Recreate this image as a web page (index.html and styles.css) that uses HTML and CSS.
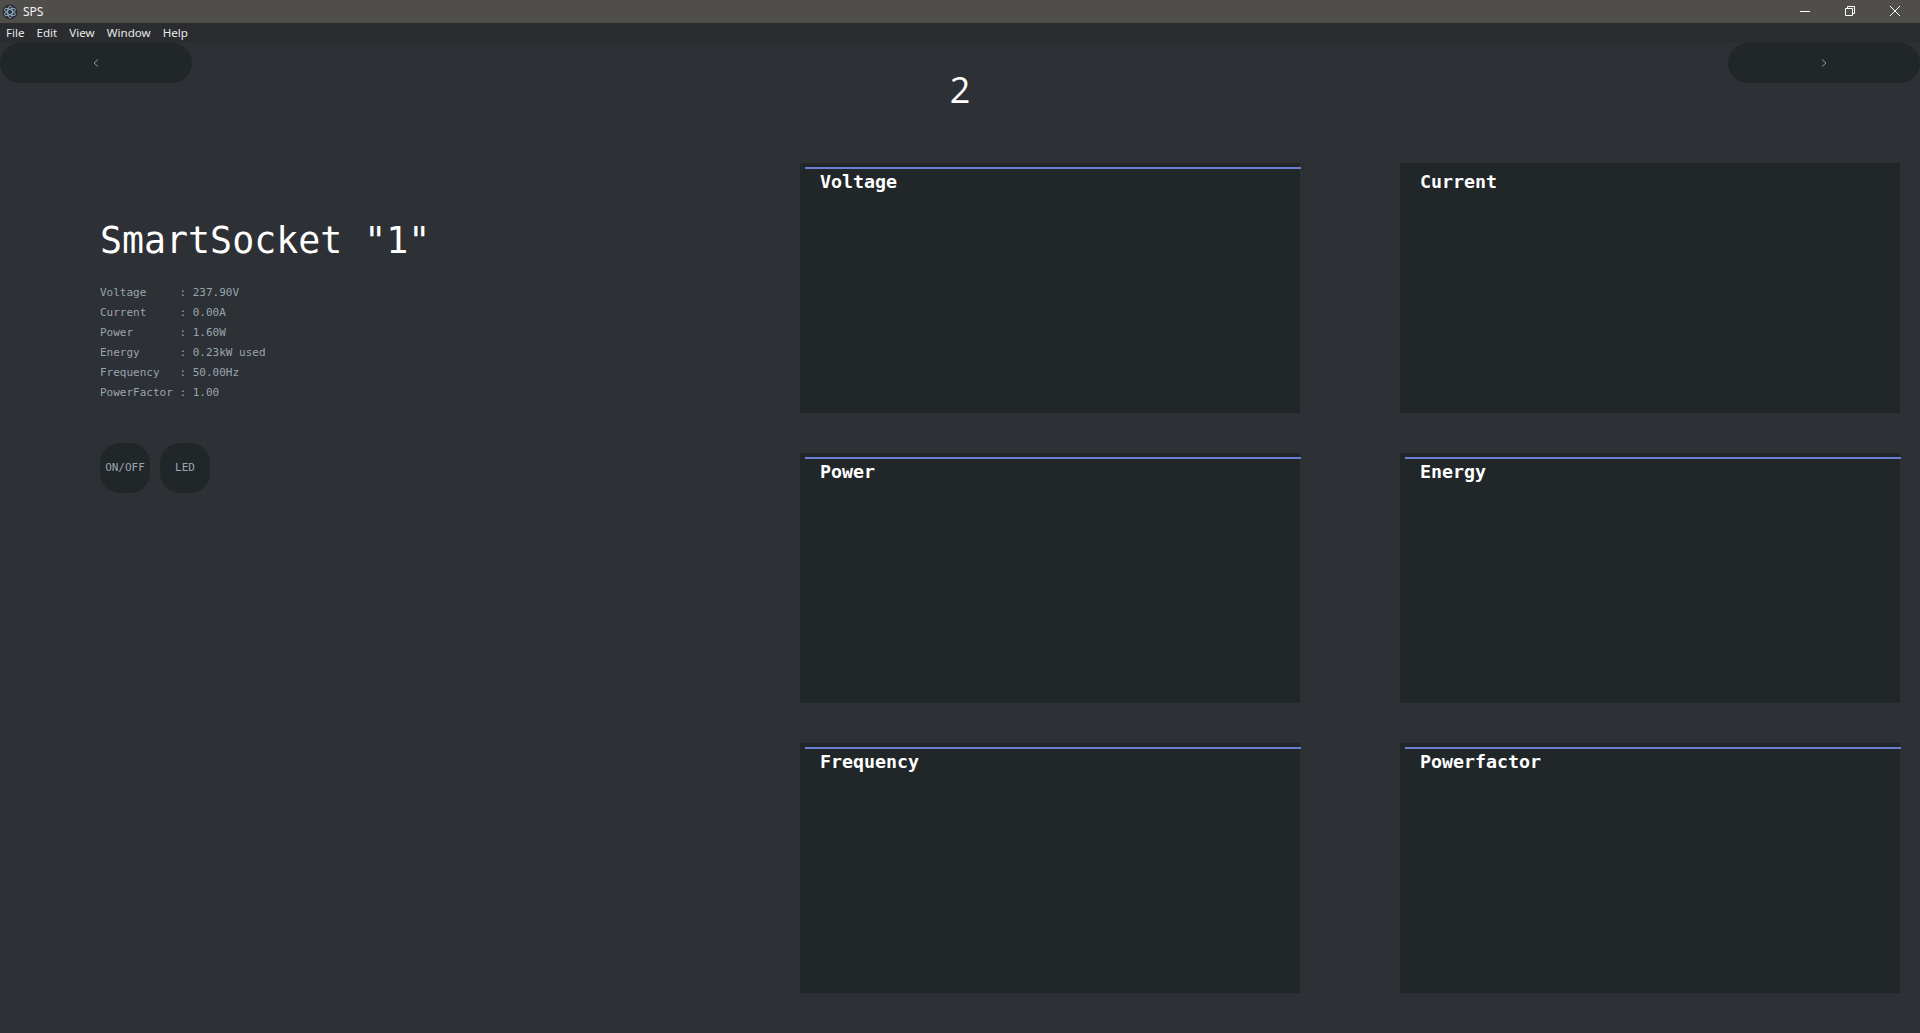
FILE: index.html
```html
<!DOCTYPE html>
<html>
<head>
	<title>SPS</title>
	<link rel="stylesheet" href="styles.css">
</head>
<body>
	<div class="titlebar">
		<div class="titlebar-left">
			<svg class="app-icon" width="16" height="16" viewBox="0 0 16 16">
				<circle cx="8" cy="8" r="7.5" fill="#2b2e3a"/>
				<g fill="none" stroke="#9fc3d2" stroke-width="0.8">
					<ellipse cx="8" cy="8" rx="6" ry="2.4" transform="rotate(30 8 8)"/>
					<ellipse cx="8" cy="8" rx="6" ry="2.4" transform="rotate(90 8 8)"/>
					<ellipse cx="8" cy="8" rx="6" ry="2.4" transform="rotate(150 8 8)"/>
				</g>
			</svg>
			<span>SPS</span>
		</div>
		<div class="window-btns">
			<svg width="10" height="10" viewBox="0 0 10 10"><path d="M0 5.5H10" stroke="#fff" fill="none"/></svg>
			<svg width="10" height="10" viewBox="0 0 10 10"><path d="M0.5 2.5H7.5V9.5H0.5ZM2.5 2.5V0.5H9.5V7.5H7.5" stroke="#fff" fill="none"/></svg>
			<svg width="10" height="10" viewBox="0 0 10 10"><path d="M0 0L10 10M10 0L0 10" stroke="#fff" fill="none"/></svg>
		</div>
	</div>
	<div class="menubar">
		<span>File</span>
		<span>Edit</span>
		<span>View</span>
		<span>Window</span>
		<span>Help</span>
	</div>
	<div class="nav">
		<button class="nav-btn">
			<svg width="6" height="8" viewBox="0 0 6 8"><path d="M5 0.5L1 4L5 7.5" stroke="#8a949c" fill="none"/></svg>
		</button>
		<button class="nav-btn">
			<svg width="6" height="8" viewBox="0 0 6 8"><path d="M1 0.5L5 4L1 7.5" stroke="#8a949c" fill="none"/></svg>
		</button>
	</div>
	<h1 class="page-num">2</h1>
	<div class="content">
		<div class="info">
			<h2 class="socket-name">SmartSocket "1"</h2>
			<pre class="stats">Voltage     : 237.90V
Current     : 0.00A
Power       : 1.60W
Energy      : 0.23kW used
Frequency   : 50.00Hz
PowerFactor : 1.00</pre>
			<div class="actions">
				<button class="action-btn">ON/OFF</button>
				<button class="action-btn">LED</button>
			</div>
		</div>
		<div class="charts">
			<div class="chart"><div class="chart-title">Voltage</div></div>
			<div class="chart"><div class="chart-title no-line">Current</div></div>
			<div class="chart"><div class="chart-title">Power</div></div>
			<div class="chart"><div class="chart-title">Energy</div></div>
			<div class="chart"><div class="chart-title">Frequency</div></div>
			<div class="chart"><div class="chart-title">Powerfactor</div></div>
		</div>
	</div>
</body>
</html>
```

FILE: styles.css
```css
* {
	box-sizing: border-box;
}
html, body {
	height: 100%;
}
body {
	margin: 0;
	background: #2d3035;
	color: #fff;
	font-family: "DejaVu Sans Mono", monospace;
	overflow: hidden;
}
.titlebar {
	height: 23px;
	background: #504e4b;
	display: flex;
	justify-content: space-between;
	align-items: center;
	font-family: "Noto Sans", sans-serif;
	font-size: 12px;
	color: #f2f2f2;
}
.titlebar-left {
	display: flex;
	align-items: center;
	gap: 5px;
	padding-left: 2px;
}
.window-btns {
	display: flex;
	gap: 35px;
	padding: 0 20px 2px 0;
}
.menubar {
	height: 20px;
	background: #2a2c30;
	display: flex;
	align-items: center;
	gap: 12px;
	padding: 0 0 2px 6px;
	font-family: "Noto Sans", sans-serif;
	font-size: 11.6px;
	color: #e8e8e8;
}
.nav {
	display: flex;
	justify-content: space-between;
}
.nav-btn {
	width: 192px;
	height: 40px;
	border: none;
	border-radius: 20px;
	background: #212629;
	padding: 0;
	display: flex;
	align-items: center;
	justify-content: center;
}
.page-num {
	margin: -18px 0 0;
	height: 50px;
	line-height: 50px;
	text-align: center;
	font-family: "Open Sans", sans-serif;
	font-size: 36px;
	font-weight: 400;
}
.content {
	display: flex;
	padding-top: 48px;
}
.info {
	width: 800px;
	padding: 60px 0 0 100px;
}
.socket-name {
	margin: 0;
	height: 36px;
	line-height: 36px;
	font-size: 36.6px;
	font-weight: 400;
}
.stats {
	margin: 24px 0 0;
	font-family: "DejaVu Sans Mono", monospace;
	font-size: 11px;
	line-height: 20px;
	color: #9aa5ad;
}
.actions {
	display: flex;
	gap: 10px;
	margin-top: 40px;
}
.action-btn {
	width: 50px;
	height: 50px;
	border: none;
	border-radius: 20px;
	background: #212629;
	color: #9aa5ad;
	font-family: "DejaVu Sans Mono", monospace;
	font-size: 11px;
	padding: 0 0 2px;
}
.charts {
	display: grid;
	grid-template-columns: 500px 500px;
	grid-auto-rows: 250px;
	column-gap: 100px;
	row-gap: 40px;
}
.chart {
	background: #212629;
	padding-top: 4px;
}
.chart-title {
	margin: 0 -1px 0 5px;
	padding: 1px 0 0 15px;
	border-top: 2px solid #6b80d4;
	font-size: 18.3px;
	font-weight: 700;
	line-height: 24px;
}
.chart-title.no-line {
	border-top-color: transparent;
}
```
